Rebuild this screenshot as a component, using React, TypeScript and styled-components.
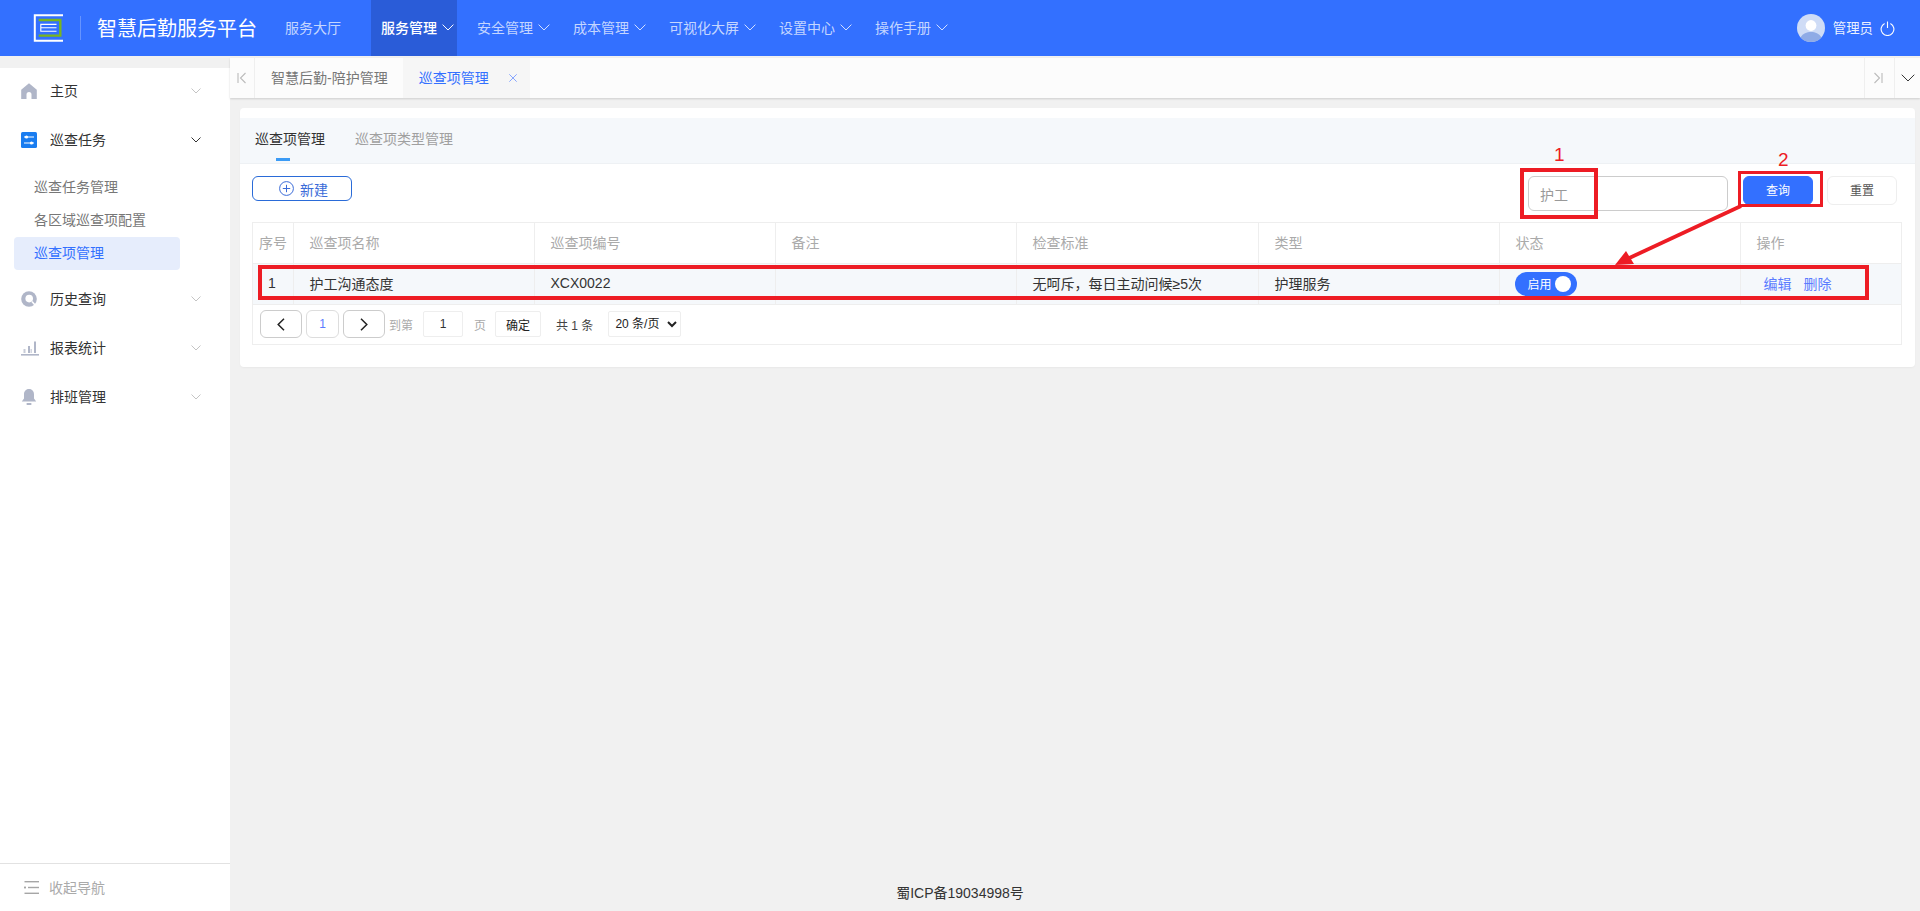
import React from "react";
import styled, { createGlobalStyle } from "styled-components";

const Global = createGlobalStyle`
  html, body { margin: 0; padding: 0; height: 100%; }
  body { font-family: "Liberation Sans", "Noto Sans CJK SC", sans-serif; font-size: 14px; color: #333; background: #f1f1f1; }
  * { box-sizing: border-box; }
`;

const Page = styled.div`
  position: relative;
  display: flex;
  flex-direction: column;
  width: 1920px;
  height: 911px;
  overflow: hidden;
  background: #f1f1f1;
`;

/* ---------- header ---------- */
const Header = styled.header`
  display: flex;
  align-items: center;
  height: 56px;
  flex: none;
  background: #3370ff;
  color: #fff;
`;
const LogoWrap = styled.div`
  display: flex;
  margin-left: 33px;
  width: 30px;
  height: 30px;
`;
const HeaderDivider = styled.span`
  width: 1px;
  height: 24px;
  margin: 0 16px 0 17px;
  background: rgba(255, 255, 255, 0.25);
`;
const Title = styled.h1`
  margin: 2px 18px 0 0;
  width: 160px;
  font-size: 20px;
  font-weight: 400;
  line-height: 28px;
  white-space: nowrap;
`;
const Nav = styled.nav`
  display: flex;
  gap: 10px;
  height: 56px;
`;
const NavItem = styled.div<{ $active?: boolean; $plain?: boolean }>`
  display: flex;
  align-items: center;
  gap: 5px;
  height: 56px;
  padding: 0 ${(p) => (p.$plain ? "20px" : "3px")} 0 10px;
  background: ${(p) => (p.$active ? "#2a5cd8" : "transparent")};
  color: ${(p) => (p.$active ? "#fff" : "rgba(255,255,255,0.72)")};
  font-size: 14px;
  font-weight: ${(p) => (p.$active ? 500 : 400)};
  white-space: nowrap;
`;
const NavText = styled.span`
  padding-bottom: 2px;
`;
const User = styled.div`
  display: flex;
  align-items: center;
  margin-left: auto;
  padding-right: 25px;
  font-size: 13.4px;
  color: rgba(255, 255, 255, 0.92);
`;
const UserName = styled.span`
  padding-bottom: 2px;
`;
const Avatar = styled.div`
  display: flex;
  width: 28px;
  height: 28px;
  margin-right: 8px;
`;
const PowerWrap = styled.div`
  display: flex;
  margin-left: 7px;
`;

/* ---------- body ---------- */
const Body = styled.div`
  display: flex;
  flex: 1;
  min-height: 0;
`;
const Sidebar = styled.aside`
  display: flex;
  flex-direction: column;
  flex: none;
  width: 230px;
  margin-top: 12px;
  background: #fff;
`;
const Menu = styled.div`
  flex: 1;
`;
const MenuRow = styled.div`
  display: flex;
  align-items: center;
  height: 46px;
  margin-bottom: 3px;
  padding: 0 29px 0 21px;
  color: #333;
`;
const MenuIcon = styled.span`
  display: flex;
  width: 29px;
  flex: none;
`;
const MenuLabel = styled.span`
  flex: 1;
  padding-bottom: 2px;
  font-size: 14px;
`;
const SubMenu = styled.div`
  display: flex;
  flex-direction: column;
  padding: 5px 0 6px;
`;
const SubItem = styled.div<{ $active?: boolean }>`
  display: flex;
  align-items: center;
  height: 33px;
  width: 166px;
  margin-left: 14px;
  padding: 0 0 4px 20px;
  border-radius: 4px;
  color: ${(p) => (p.$active ? "#3370ff" : "#777")};
  background: ${(p) => (p.$active ? "#e6edfc" : "transparent")};
  font-size: 14px;
  white-space: nowrap;
`;
const Collapse = styled.div`
  display: flex;
  align-items: center;
  gap: 10px;
  height: 48px;
  padding-left: 24px;
  border-top: 1px solid #e2e2e2;
  color: #aaa;
  font-size: 14px;
`;
const CollapseText = styled.span`
  padding-bottom: 2px;
`;

const Main = styled.main`
  display: flex;
  flex-direction: column;
  flex: 1;
  min-width: 0;
`;
const TabBar = styled.div`
  display: flex;
  height: 40px;
  margin-top: 2px;
  flex: none;
  background: #fcfcfc;
  box-shadow: 0 1px 2px rgba(0, 0, 0, 0.15);
`;
const TabEdge = styled.div<{ $w: number; $left?: boolean; $right?: boolean }>`
  display: flex;
  align-items: center;
  justify-content: center;
  flex: none;
  width: ${(p) => p.$w}px;
  border-left: ${(p) => (p.$left ? "1px solid #efefef" : "none")};
  border-right: ${(p) => (p.$right ? "1px solid #efefef" : "none")};
`;
const PageTab = styled.div<{ $active?: boolean }>`
  display: flex;
  align-items: center;
  flex: none;
  height: 40px;
  padding: 0 15px 2px 16px;
  font-size: 14px;
  white-space: nowrap;
  color: ${(p) => (p.$active ? "#3370ff" : "#777")};
  background: ${(p) => (p.$active ? "#f6f6f6" : "transparent")};
`;
const CloseX = styled.span`
  display: flex;
  margin: 2px -2px 0 20px;
`;
const Spacer = styled.div`
  flex: 1;
`;
const Card = styled.section`
  margin: 10px 5px 0 10px;
  padding: 10px 0 22px;
  background: #fff;
  border-radius: 4px;
  box-shadow: 0 1px 2px rgba(0, 0, 0, 0.04);
`;
const CardTabs = styled.div`
  display: flex;
  gap: 30px;
  height: 46px;
  padding-left: 15px;
  background: #f5f8fb;
  border-bottom: 1px solid #eef1f4;
`;
const CardTab = styled.div<{ $active?: boolean }>`
  position: relative;
  display: flex;
  align-items: center;
  height: 42px;
  padding-bottom: 2px;
  font-size: 14px;
  color: ${(p) => (p.$active ? "#333" : "#a0a0a0")};
  &::after {
    content: "";
    display: ${(p) => (p.$active ? "block" : "none")};
    position: absolute;
    left: 21px;
    bottom: -1px;
    width: 14px;
    height: 3px;
    background: #3b9bf5;
  }
`;
const Toolbar = styled.div`
  display: flex;
  align-items: flex-start;
  height: 58px;
  padding: 12px 18px 0 12px;
`;
const NewButton = styled.button`
  display: flex;
  align-items: center;
  gap: 6px;
  width: 100px;
  height: 25px;
  padding: 0 0 0 26px;
  background: #fff;
  border: 1px solid #2a6bd8;
  border-radius: 6px;
  color: #3a6bd8;
  font: inherit;
  font-size: 14px;
`;
const SearchInput = styled.input`
  width: 200px;
  height: 35px;
  margin-left: auto;
  padding: 2px 11px 0;
  border: 1px solid #ccc;
  border-radius: 6px;
  font: inherit;
  font-size: 14px;
  outline: none;
  &::placeholder { color: #999; opacity: 1; }
`;
const ActionButton = styled.button<{ $primary?: boolean }>`
  width: 70px;
  height: 29px;
  margin-left: ${(p) => (p.$primary ? "15px" : "14px")};
  padding: 0 0 2px;
  border-radius: 6px;
  border: 1px solid ${(p) => (p.$primary ? "#3370ff" : "#eee")};
  background: ${(p) => (p.$primary ? "#3370ff" : "#fff")};
  color: ${(p) => (p.$primary ? "#fff" : "#555")};
  font: inherit;
  font-size: 12px;
`;

const TableWrap = styled.div`
  width: 1650px;
  margin-left: 12px;
  border: 1px solid #eee;
`;
const Table = styled.table`
  width: 100%;
  table-layout: fixed;
  border-collapse: collapse;
`;
const Th = styled.th<{ $pad?: number }>`
  height: 40px;
  padding: 0 0 2px ${(p) => p.$pad ?? 16}px;
  border-right: 1px solid #eee;
  border-bottom: 1px solid #eee;
  color: #aaa;
  font-size: 14px;
  font-weight: 400;
  text-align: left;
  white-space: nowrap;
  &:last-child { border-right: none; }
`;
const Td = styled.td<{ $pad?: number }>`
  height: 41px;
  padding: 0 0 2px ${(p) => p.$pad ?? 16}px;
  border-right: 1px solid #eee;
  border-bottom: 1px solid #eee;
  background: #f5f8fb;
  color: #333;
  font-size: 14px;
  white-space: nowrap;
  &:last-child { border-right: none; }
`;
const Switch = styled.div`
  display: flex;
  align-items: center;
  justify-content: space-between;
  width: 62px;
  height: 24px;
  margin-bottom: -2px;
  padding: 0 6px 0 13px;
  border-radius: 12px;
  background: #3370ff;
  color: #fff;
  font-size: 12px;
`;
const Knob = styled.span`
  width: 16px;
  height: 16px;
  border-radius: 50%;
  background: #fff;
`;
const LinkText = styled.a`
  margin-right: 12px;
  color: #5b7cff;
  font-size: 14px;
`;
const Pager = styled.div`
  display: flex;
  align-items: center;
  height: 39px;
  padding-left: 7px;
`;
const PageBtn = styled.button<{ $w: number; $blue?: boolean }>`
  display: flex;
  align-items: center;
  justify-content: center;
  width: ${(p) => p.$w}px;
  height: 28px;
  padding: 0;
  margin-right: 4px;
  background: #fff;
  border: 1px solid ${(p) => (p.$blue ? "#ddd" : "#ccc")};
  border-radius: 6px;
  color: ${(p) => (p.$blue ? "#5b7cff" : "#222")};
  font: inherit;
  font-size: 12px;
`;
const PagerLabel = styled.span<{ $ml: number; $dark?: boolean }>`
  margin-left: ${(p) => p.$ml}px;
  color: ${(p) => (p.$dark ? "#444" : "#aaa")};
  font-size: 12px;
  white-space: nowrap;
`;
const PagerInput = styled.input`
  width: 40px;
  height: 26px;
  margin-left: 10px;
  border: 1px solid #eee;
  border-radius: 2px;
  font: inherit;
  font-size: 12px;
  text-align: center;
  color: #333;
  outline: none;
`;
const Confirm = styled.button`
  width: 46px;
  height: 26px;
  margin-left: 9px;
  padding: 0;
  background: #fff;
  border: 1px solid #eee;
  border-radius: 2px;
  font: inherit;
  font-size: 12px;
  color: #222;
`;
const PageSize = styled.select`
  width: 73px;
  height: 26px;
  margin-left: 15px;
  padding: 0 2px;
  background: #fff;
  border: 1px solid #eee;
  border-radius: 2px;
  font: inherit;
  font-size: 12px;
  color: #222;
  outline: none;
`;
const Footer = styled.footer`
  margin-top: auto;
  padding: 0 230px 8px 0;
  text-align: center;
  font-size: 14px;
  line-height: 20px;
  color: #333;
`;

/* ---------- annotations lying over the page ---------- */
const RedBox = styled.div<{ $x: number; $y: number; $w: number; $h: number; $b: number }>`
  position: absolute;
  left: ${(p) => p.$x}px;
  top: ${(p) => p.$y}px;
  width: ${(p) => p.$w}px;
  height: ${(p) => p.$h}px;
  border: ${(p) => p.$b}px solid #ed1c24;
`;
const RedNum = styled.span<{ $x: number; $y: number }>`
  position: absolute;
  left: ${(p) => p.$x}px;
  top: ${(p) => p.$y}px;
  color: #ed1c24;
  font-size: 19px;
  line-height: 22px;
`;
const ArrowSvg = styled.svg`
  position: absolute;
  left: 0;
  top: 0;
  pointer-events: none;
`;

const Chevron = ({ color = "rgba(255,255,255,.8)", w = 10 }: { color?: string; w?: number }) => (
  <svg width={w} height={w * 0.6} viewBox="0 0 10 6" fill="none" stroke={color} strokeWidth={10 / w}>
    <polyline points="0.5,0.5 5,5 9.5,0.5" />
  </svg>
);

const Logo = () => (
  <svg width="30" height="30" viewBox="0 0 30 30" fill="none">
    <path d="M30 2.2H1.8V27.8H30" stroke="#fff" strokeWidth="2" />
    <path d="M5.7 7H27.3V22.6H5.7" stroke="#7ab51d" strokeWidth="2.4" />
    <path d="M23.5 11.4H7.8V18.2H23.5M7.8 14.8H23.5" stroke="#fff" strokeWidth="1.1" />
  </svg>
);

const AvatarImg = () => (
  <svg width="28" height="28" viewBox="0 0 28 28">
    <circle cx="14" cy="14" r="14" fill="#cfdcf6" />
    <circle cx="14" cy="11.5" r="5.4" fill="#fff" />
    <path d="M3.6 23.4C6 19.4 9.6 18 14 18s8 1.4 10.4 5.4A14 14 0 0 1 14 28 14 14 0 0 1 3.6 23.4z" fill="#8fabe6" />
  </svg>
);

const Power = () => (
  <svg width="15" height="15" viewBox="0 0 15 15" fill="none" stroke="#fff" strokeWidth="1.1">
    <path d="M4.6 2.4a6.4 6.4 0 1 0 5.8 0" />
    <path d="M7.5 0.5V7" />
  </svg>
);

const HomeIcon = () => (
  <svg width="16" height="16" viewBox="0 0 16 16" fill="#b0b6c8">
    <path d="M8 0.3 0.2 6.8V16H5.5V11.4a2.5 2.5 0 0 1 5 0V16H15.8V6.8z" />
  </svg>
);
const TaskIcon = () => (
  <svg width="16" height="16" viewBox="0 0 16 16">
    <rect width="16" height="16" rx="1.5" fill="#1a7df0" />
    <path d="M3 5H13M3 11H13" stroke="#fff" strokeWidth="1.2" />
    <circle cx="5.5" cy="5" r="1.6" fill="#fff" />
    <circle cx="10.5" cy="11" r="1.6" fill="#fff" />
  </svg>
);
const HistoryIcon = () => (
  <svg width="16" height="16" viewBox="0 0 16 16" fill="none">
    <circle cx="8" cy="8" r="7.8" fill="#b0b6c8" />
    <circle cx="8.2" cy="7.6" r="3.8" fill="#fff" />
    <path d="M11 10.5 14 14" stroke="#fff" strokeWidth="1.6" />
  </svg>
);
const ChartIcon = () => (
  <svg width="18" height="15" viewBox="0 0 18 15" fill="#b0b6c8">
    <rect x="0" y="13" width="18" height="1.6" />
    <rect x="2.5" y="8" width="2" height="4" opacity=".7" />
    <rect x="7" y="5" width="2" height="7" />
    <rect x="9.5" y="8" width="1.4" height="4" opacity=".6" />
    <rect x="13" y="0.5" width="2" height="11.5" />
  </svg>
);
const BellIcon = () => (
  <svg width="16" height="16" viewBox="0 0 16 16" fill="#b0b6c8">
    <path d="M8 0C4.6 0 3 2.6 3 5.4V9.6L0.8 12.6H15.2L13 9.6V5.4C13 2.6 11.4 0 8 0z" />
    <rect x="5.6" y="14" width="4.8" height="2" rx="0.6" />
  </svg>
);
const CollapseIcon = () => (
  <svg width="15" height="13" viewBox="0 0 15 13" fill="#a6a6a6">
    <rect x="0.5" y="0" width="14.5" height="1.4" />
    <rect x="4" y="5.8" width="11" height="1.4" />
    <rect x="0" y="5.6" width="2" height="1.8" />
    <rect x="0.5" y="11.6" width="14.5" height="1.4" />
  </svg>
);
const EdgeLeft = () => (
  <svg width="10" height="12" viewBox="0 0 10 12" fill="none" stroke="#bbb" strokeWidth="1.1">
    <path d="M1 1V11M8.5 1 3.5 6l5 5" />
  </svg>
);
const EdgeRight = () => (
  <svg width="14" height="12" viewBox="0 0 14 12" fill="none" stroke="#bbb" strokeWidth="1.1">
    <path d="M9 1V11M1.5 1l5 5-5 5" />
  </svg>
);
const CloseIcon = () => (
  <svg width="8" height="8" viewBox="0 0 8 8" stroke="#7a9cff" strokeWidth="0.9">
    <path d="M0.3 0.3 7.7 7.7M7.7 0.3 0.3 7.7" />
  </svg>
);
const PlusCircle = () => (
  <svg width="15" height="15" viewBox="0 0 15 15" fill="none" stroke="#3a6bd8" strokeWidth="1">
    <circle cx="7.5" cy="7.5" r="6.9" />
    <path d="M7.5 3.8V11.2M3.8 7.5H11.2" />
  </svg>
);
const PagerArrow = ({ dir }: { dir: "l" | "r" }) => (
  <svg width="8" height="13" viewBox="0 0 8 13" fill="none" stroke="#222" strokeWidth="1.5">
    <path d={dir === "l" ? "M7 0.7 1.2 6.5 7 12.3" : "M1 0.7 6.8 6.5 1 12.3"} />
  </svg>
);

const navItems = ["安全管理", "成本管理", "可视化大屏", "设置中心", "操作手册"];
const columns = [
  { t: "序号", w: 40, pad: 6 },
  { t: "巡查项名称", w: 241 },
  { t: "巡查项编号", w: 241 },
  { t: "备注", w: 241 },
  { t: "检查标准", w: 242 },
  { t: "类型", w: 241 },
  { t: "状态", w: 241 },
  { t: "操作", w: 161 },
];

export default function App() {
  return (
    <Page>
      <Global />
      <Header>
        <LogoWrap><Logo /></LogoWrap>
        <HeaderDivider />
        <Title>智慧后勤服务平台</Title>
        <Nav>
          <NavItem $plain><NavText>服务大厅</NavText></NavItem>
          <NavItem $active><NavText>服务管理</NavText><Chevron color="#fff" w={12} /></NavItem>
          {navItems.map((n) => (
            <NavItem key={n}><NavText>{n}</NavText><Chevron w={12} /></NavItem>
          ))}
        </Nav>
        <User>
          <Avatar><AvatarImg /></Avatar>
          <UserName>管理员</UserName>
          <PowerWrap><Power /></PowerWrap>
        </User>
      </Header>
      <Body>
        <Sidebar>
          <Menu>
            <MenuRow>
              <MenuIcon><HomeIcon /></MenuIcon>
              <MenuLabel>主页</MenuLabel>
              <Chevron color="#c4c4c4" />
            </MenuRow>
            <MenuRow>
              <MenuIcon><TaskIcon /></MenuIcon>
              <MenuLabel>巡查任务</MenuLabel>
              <Chevron color="#333" />
            </MenuRow>
            <SubMenu>
              <SubItem>巡查任务管理</SubItem>
              <SubItem>各区域巡查项配置</SubItem>
              <SubItem $active>巡查项管理</SubItem>
            </SubMenu>
            <MenuRow>
              <MenuIcon><HistoryIcon /></MenuIcon>
              <MenuLabel>历史查询</MenuLabel>
              <Chevron color="#c4c4c4" />
            </MenuRow>
            <MenuRow>
              <MenuIcon><ChartIcon /></MenuIcon>
              <MenuLabel>报表统计</MenuLabel>
              <Chevron color="#c4c4c4" />
            </MenuRow>
            <MenuRow>
              <MenuIcon><BellIcon /></MenuIcon>
              <MenuLabel>排班管理</MenuLabel>
              <Chevron color="#c4c4c4" />
            </MenuRow>
          </Menu>
          <Collapse><CollapseIcon /><CollapseText>收起导航</CollapseText></Collapse>
        </Sidebar>
        <Main>
          <TabBar>
            <TabEdge $w={25} $right><EdgeLeft /></TabEdge>
            <PageTab>智慧后勤-陪护管理</PageTab>
            <PageTab $active>巡查项管理<CloseX><CloseIcon /></CloseX></PageTab>
            <Spacer />
            <TabEdge $w={30} $left><EdgeRight /></TabEdge>
            <TabEdge $w={26} $left><Chevron color="#333" w={14} /></TabEdge>
          </TabBar>
          <Card>
            <CardTabs>
              <CardTab $active>巡查项管理</CardTab>
              <CardTab>巡查项类型管理</CardTab>
            </CardTabs>
            <Toolbar>
              <NewButton><PlusCircle />新建</NewButton>
              <SearchInput placeholder="护工" />
              <ActionButton $primary>查询</ActionButton>
              <ActionButton>重置</ActionButton>
            </Toolbar>
            <TableWrap>
              <Table>
                <colgroup>
                  {columns.map((c) => <col key={c.t} style={{ width: c.w }} />)}
                </colgroup>
                <thead>
                  <tr>
                    {columns.map((c) => <Th key={c.t} $pad={c.pad}>{c.t}</Th>)}
                  </tr>
                </thead>
                <tbody>
                  <tr>
                    <Td $pad={15}>1</Td>
                    <Td>护工沟通态度</Td>
                    <Td>XCX0022</Td>
                    <Td />
                    <Td>无呵斥，每日主动问候≥5次</Td>
                    <Td>护理服务</Td>
                    <Td $pad={15}><Switch>启用<Knob /></Switch></Td>
                    <Td $pad={23}>
                      <LinkText>编辑</LinkText>
                      <LinkText>删除</LinkText>
                    </Td>
                  </tr>
                </tbody>
              </Table>
              <Pager>
                <PageBtn $w={42}><PagerArrow dir="l" /></PageBtn>
                <PageBtn $w={33} $blue>1</PageBtn>
                <PageBtn $w={42}><PagerArrow dir="r" /></PageBtn>
                <PagerLabel $ml={0}>到第</PagerLabel>
                <PagerInput defaultValue="1" />
                <PagerLabel $ml={11}>页</PagerLabel>
                <Confirm>确定</Confirm>
                <PagerLabel $ml={15} $dark>共 1 条</PagerLabel>
                <PageSize defaultValue="20">
                  <option value="20">20 条/页</option>
                </PageSize>
              </Pager>
            </TableWrap>
          </Card>
          <Footer>蜀ICP备19034998号</Footer>
        </Main>
      </Body>

      <RedBox $x={1520} $y={168} $w={78} $h={51} $b={4} />
      <RedBox $x={1738} $y={171} $w={85} $h={36} $b={3} />
      <RedBox $x={258} $y={265} $w={1611} $h={35} $b={4} />
      <RedNum $x={1554} $y={144}>1</RedNum>
      <RedNum $x={1778} $y={149}>2</RedNum>
      <ArrowSvg width="1920" height="911" viewBox="0 0 1920 911">
        <path d="M1741 206 1625 260" stroke="#ed1c24" strokeWidth="3.8" fill="none" />
        <path d="M1615 265 1626 251 1634 264z" fill="#ed1c24" />
      </ArrowSvg>
    </Page>
  );
}
